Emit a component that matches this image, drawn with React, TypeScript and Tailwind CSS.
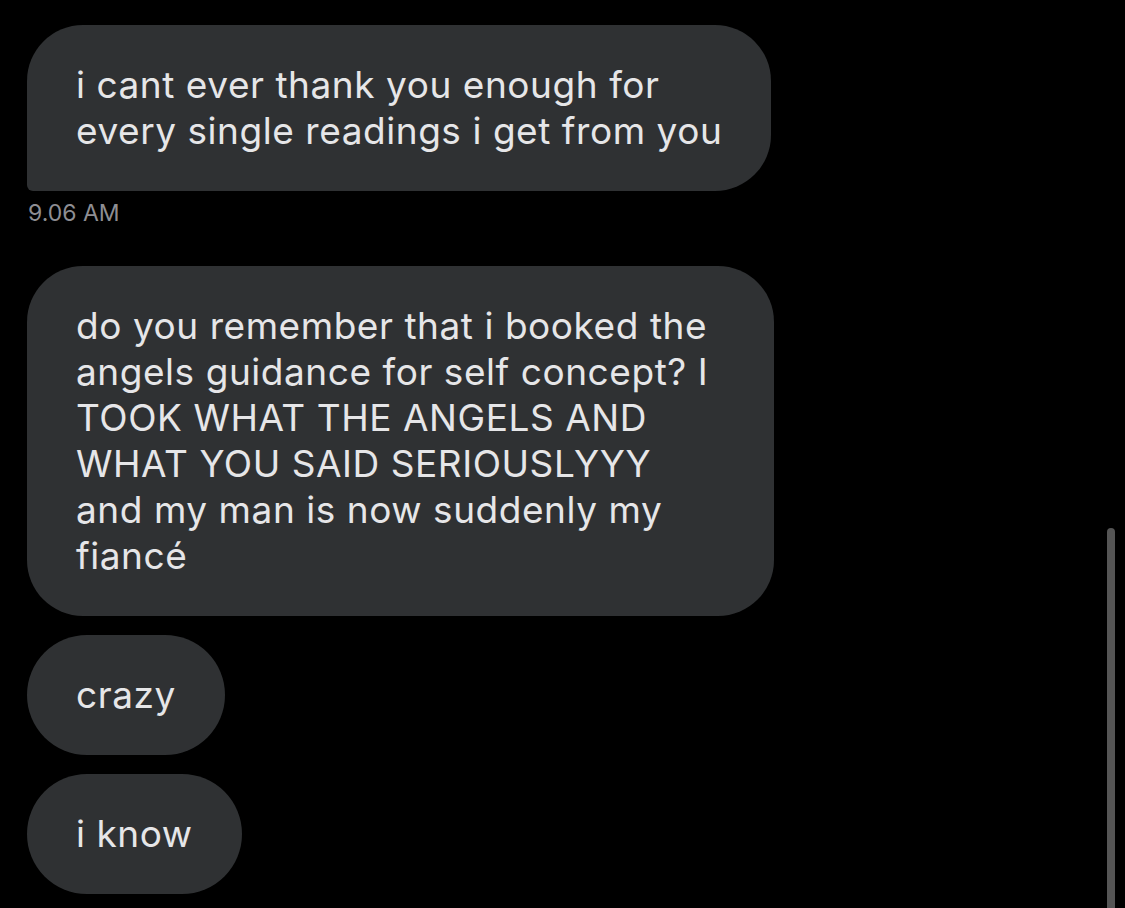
import React from "react"

const font = { fontFamily: "Inter, 'Noto Sans', sans-serif" }

function Bubble({
  lines,
  wide = false,
  className = "",
}: {
  lines: string[]
  wide?: boolean
  className?: string
}) {
  return (
    <div
      className={`${wide ? "w-[747px]" : "w-fit"} bg-[#2f3133] text-[#e6e6e8] text-[37px] leading-[46px] tracking-[0.55px] pl-[49px] pr-[49px] py-[37px] ${className}`}
    >
      {lines.map((line, i) => (
        <div key={i} className="whitespace-nowrap">
          {line}
        </div>
      ))}
    </div>
  )
}

export default function App() {
  return (
    <div className="relative w-[1125px] h-[908px] bg-black overflow-hidden" style={font}>
      <div className="flex flex-col items-start pl-[27px] pt-[25px]">
        <Bubble
          className="rounded-[56px] rounded-bl-[6px]"
          lines={["i cant ever thank you enough for", "every single readings i get from you"]}
        />
        <div className="mt-[12px] ml-[1px] text-[23px] leading-[20px] text-[#8e8e93]">9.06 AM</div>

        <Bubble
          wide
          className="mt-[43px] rounded-[56px]"
          lines={[
            "do you remember that i booked the",
            "angels guidance for self concept? I",
            "TOOK WHAT THE ANGELS AND",
            "WHAT YOU SAID SERIOUSLYYY",
            "and my man is now suddenly my",
            "fiancé",
          ]}
        />
        <Bubble className="mt-[19px] rounded-full" lines={["crazy"]} />
        <Bubble className="mt-[19px] rounded-full" lines={["i know"]} />
      </div>

      {/* scroll indicator */}
      <div className="absolute left-[1107px] top-[528px] w-[8px] h-[400px] rounded-full bg-[#555555]" />
    </div>
  )
}
